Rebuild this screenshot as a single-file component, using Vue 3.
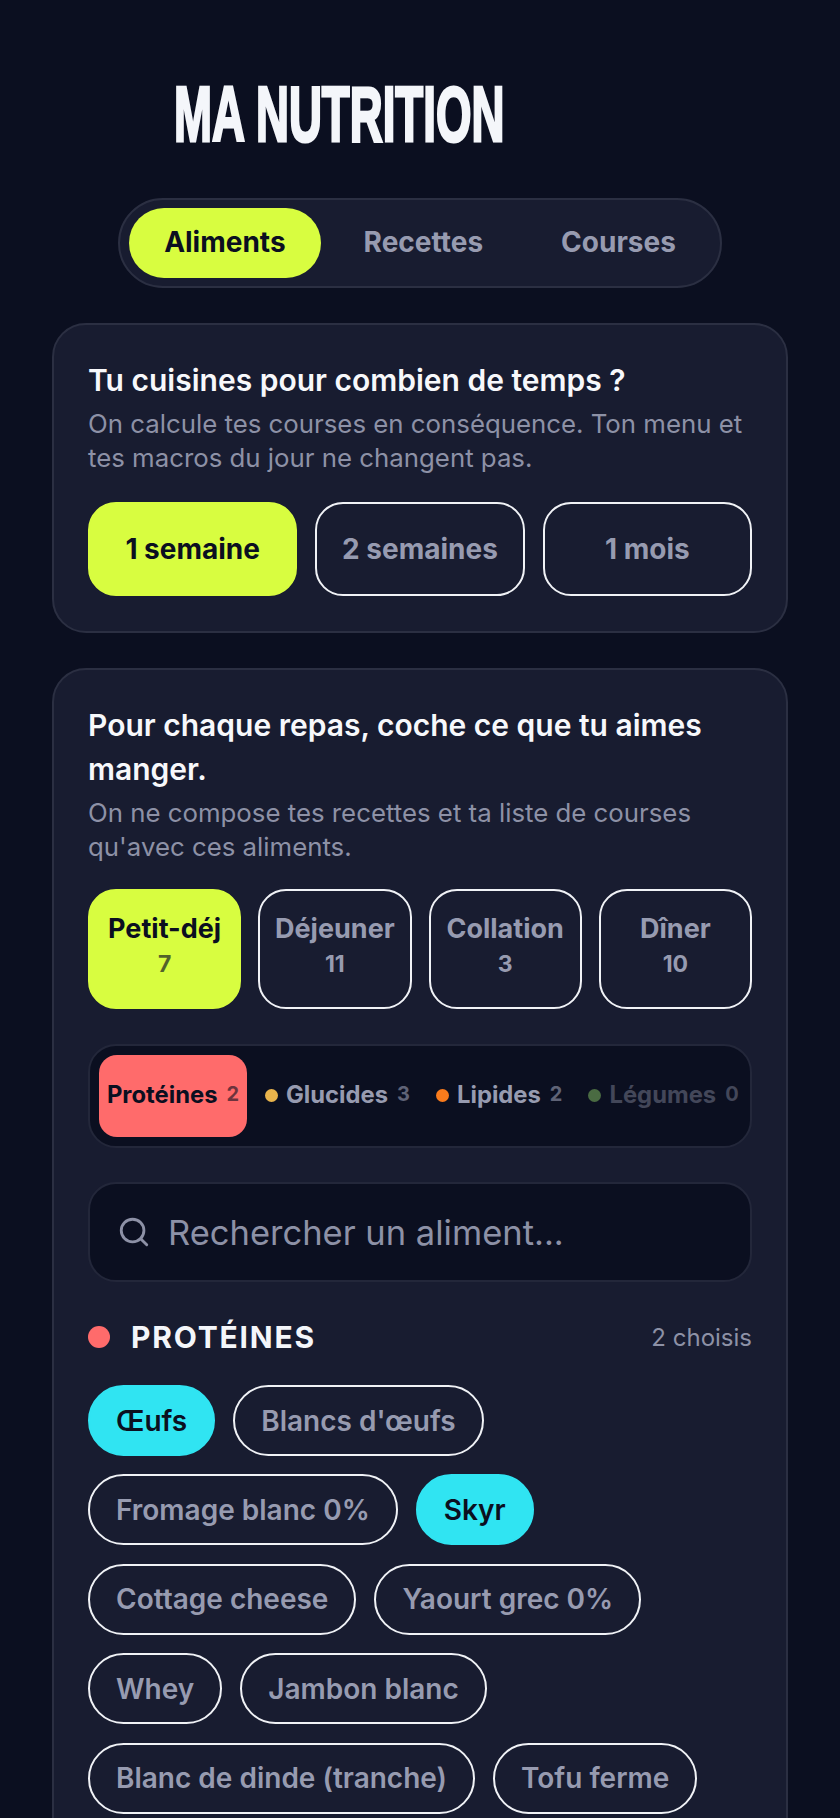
<template>
  <div class="page">
    <h1 class="title">MA NUTRITION</h1>

    <div class="tabs-wrap">
      <div class="tabs">
        <button v-for="t in tabs" :key="t" class="tab" :class="{ active: t === 'Aliments' }">{{ t }}</button>
      </div>
    </div>

    <section class="card">
      <h2 class="card-title">Tu cuisines pour combien de temps ?</h2>
      <p class="card-sub">On calcule tes courses en conséquence. Ton menu et tes macros du jour ne changent pas.</p>
      <div class="durations">
        <button v-for="d in durations" :key="d" class="duration" :class="{ active: d === '1 semaine' }">{{ d }}</button>
      </div>
    </section>

    <section class="card">
      <h2 class="card-title">Pour chaque repas, coche ce que tu aimes manger.</h2>
      <p class="card-sub">On ne compose tes recettes et ta liste de courses qu'avec ces aliments.</p>

      <div class="meals">
        <button v-for="m in meals" :key="m.name" class="meal" :class="{ active: m.name === 'Petit-déj' }">
          <span class="meal-name">{{ m.name }}</span>
          <span class="meal-count">{{ m.count }}</span>
        </button>
      </div>

      <div class="macros">
        <button v-for="m in macros" :key="m.name" class="macro" :class="{ active: m.active, empty: m.count === 0 }">
          <span v-if="!m.active" class="macro-dot" :style="{ background: m.color }"></span>
          <span class="macro-name">{{ m.name }}</span>
          <span class="macro-count">{{ m.count }}</span>
        </button>
      </div>

      <div class="search">
        <svg class="search-icon" viewBox="0 0 24 24" fill="none" stroke="currentColor" stroke-width="2" stroke-linecap="round" stroke-linejoin="round">
          <circle cx="11" cy="11" r="8" />
          <path d="m21 21-4.3-4.3" />
        </svg>
        <span>Rechercher un aliment...</span>
      </div>

      <div class="group-head">
        <span class="group-dot"></span>
        <span class="group-name">PROTÉINES</span>
        <span class="group-count">2 choisis</span>
      </div>

      <div class="chips">
        <button v-for="c in foods" :key="c" class="chip" :class="{ active: c === 'Œufs' || c === 'Skyr' }">{{ c }}</button>
      </div>
    </section>
  </div>
</template>

<script setup>
const tabs = ['Aliments', 'Recettes', 'Courses']
const durations = ['1 semaine', '2 semaines', '1 mois']
const meals = [
  { name: 'Petit-déj', count: 7 },
  { name: 'Déjeuner', count: 11 },
  { name: 'Collation', count: 3 },
  { name: 'Dîner', count: 10 }
]
const macros = [
  { name: 'Protéines', count: 2, color: '#ff6b6b', active: true },
  { name: 'Glucides', count: 3, color: '#e9b44c' },
  { name: 'Lipides', count: 2, color: '#f97b1c' },
  { name: 'Légumes', count: 0, color: '#4a6b42' }
]
const foods = [
  'Œufs',
  "Blancs d'œufs",
  'Fromage blanc 0%',
  'Skyr',
  'Cottage cheese',
  'Yaourt grec 0%',
  'Whey',
  'Jambon blanc',
  'Blanc de dinde (tranche)',
  'Tofu ferme'
]
</script>

<style>
html, body {
  margin: 0;
  background: #0b0f20;
}
</style>

<style scoped>
.page {
  height: 1818px;
  overflow: hidden;
  box-sizing: border-box;
  padding: 0 52px;
  background: #0b0f20;
  font-family: Inter, "Liberation Sans", sans-serif;
}

button {
  font-family: inherit;
  cursor: pointer;
  box-sizing: border-box;
}

.title {
  margin: 0;
  padding: 78px 0 0 122px;
  font-family: "Liberation Sans", sans-serif;
  font-size: 78px;
  line-height: 72px;
  font-weight: 700;
  color: #f4f6fa;
  white-space: nowrap;
  -webkit-text-stroke: 3px #f4f6fa;
  transform: scaleX(0.585);
  transform-origin: 122px 0;
}

.tabs-wrap {
  display: flex;
  justify-content: center;
  margin-top: 48px;
}

.tabs {
  display: flex;
  align-items: center;
  box-sizing: border-box;
  height: 90px;
  padding: 0 9px;
  gap: 8px;
  background: #181c30;
  border: 2px solid #2b2f42;
  border-radius: 45px;
}

.tab {
  height: 70px;
  padding: 0 35px 2px;
  border: 0;
  border-radius: 35px;
  background: transparent;
  color: #979bb0;
  font-size: 28px;
  font-weight: 700;
}

.tab.active {
  background: #d8fd40;
  color: #0b0f20;
}

.card {
  box-sizing: border-box;
  margin-top: 35px;
  padding: 33px 34px 35px;
  background: #181c30;
  border: 2px solid #2b2f42;
  border-radius: 34px;
}

.card-title {
  margin: 0;
  color: #f7f8fb;
  font-size: 30px;
  line-height: 44px;
  font-weight: 600;
}

.card-sub {
  margin: 5px 0 0;
  color: #8d91a6;
  font-size: 25.8px;
  line-height: 34px;
  font-weight: 400;
}

.durations {
  display: grid;
  grid-template-columns: repeat(3, 1fr);
  gap: 18px;
  margin-top: 27px;
}

.duration {
  height: 94px;
  border: 2px solid #f0f2f6;
  border-radius: 28px;
  background: transparent;
  color: #979bb0;
  font-size: 28px;
  font-weight: 700;
}

.duration.active {
  background: #d8fd40;
  border-color: #d8fd40;
  color: #0b0f20;
}

.meals {
  display: grid;
  grid-template-columns: repeat(4, 1fr);
  gap: 17px;
  margin-top: 25px;
}

.meal {
  display: flex;
  flex-direction: column;
  align-items: center;
  height: 120px;
  padding: 20px 0 0;
  border: 2px solid #f0f2f6;
  border-radius: 28px;
  background: transparent;
  color: #979bb0;
  font-weight: 700;
}

.meal-name {
  font-size: 27px;
  line-height: 36px;
}

.meal-count {
  font-size: 23px;
  line-height: 34px;
}

.meal.active {
  background: #d8fd40;
  border-color: #d8fd40;
  color: #0b0f20;
}

.meal.active .meal-count {
  opacity: 0.65;
}

.macros {
  display: flex;
  align-items: center;
  box-sizing: border-box;
  height: 104px;
  margin-top: 35px;
  padding: 0 9px;
  gap: 10px;
  background: #0b0f20;
  border: 2px solid #23273a;
  border-radius: 28px;
}

.macro {
  display: flex;
  align-items: center;
  justify-content: center;
  flex: none;
  gap: 9px;
  height: 82px;
  padding: 0 8px 3px;
  border: 0;
  border-radius: 18px;
  background: transparent;
  color: #979bb0;
  font-size: 23.8px;
  font-weight: 700;
}

.macro.active {
  background: #ff6b6b;
  color: #0b0f20;
  width: 148px;
}

.macro.empty .macro-name,
.macro.empty .macro-count {
  opacity: 0.4;
}

.macro-dot {
  width: 13px;
  height: 13px;
  border-radius: 50%;
  margin-top: 2px;
  margin-right: -1px;
}

.macro-count {
  font-size: 20px;
  opacity: 0.6;
  margin-top: -2px;
}

.search {
  display: flex;
  align-items: center;
  gap: 17px;
  box-sizing: border-box;
  height: 100px;
  margin-top: 34px;
  padding: 0 27px;
  background: #0b0f20;
  border: 2px solid #23273a;
  border-radius: 28px;
  color: #8d91a6;
  font-size: 34.5px;
}

.search-icon {
  width: 34px;
  height: 34px;
  flex: none;
}

.group-head {
  display: flex;
  align-items: center;
  margin-top: 37px;
  height: 36px;
}

.group-dot {
  width: 22px;
  height: 22px;
  border-radius: 50%;
  background: #ff6b6b;
}

.group-name {
  margin-left: 21px;
  color: #f4f6fa;
  font-size: 30px;
  font-weight: 700;
  letter-spacing: 1.8px;
}

.group-count {
  margin-left: auto;
  color: #8d91a6;
  font-size: 24px;
}

.chips {
  display: flex;
  flex-wrap: wrap;
  gap: 18.4px 18px;
  margin-top: 30px;
}

.chip {
  height: 71px;
  padding: 0 26px;
  border: 2px solid #f0f2f6;
  border-radius: 36px;
  background: transparent;
  color: #979bb0;
  font-size: 28px;
  font-weight: 600;
}

.chip.active {
  background: #30e4f2;
  border-color: #30e4f2;
  color: #0b0f20;
}
</style>
